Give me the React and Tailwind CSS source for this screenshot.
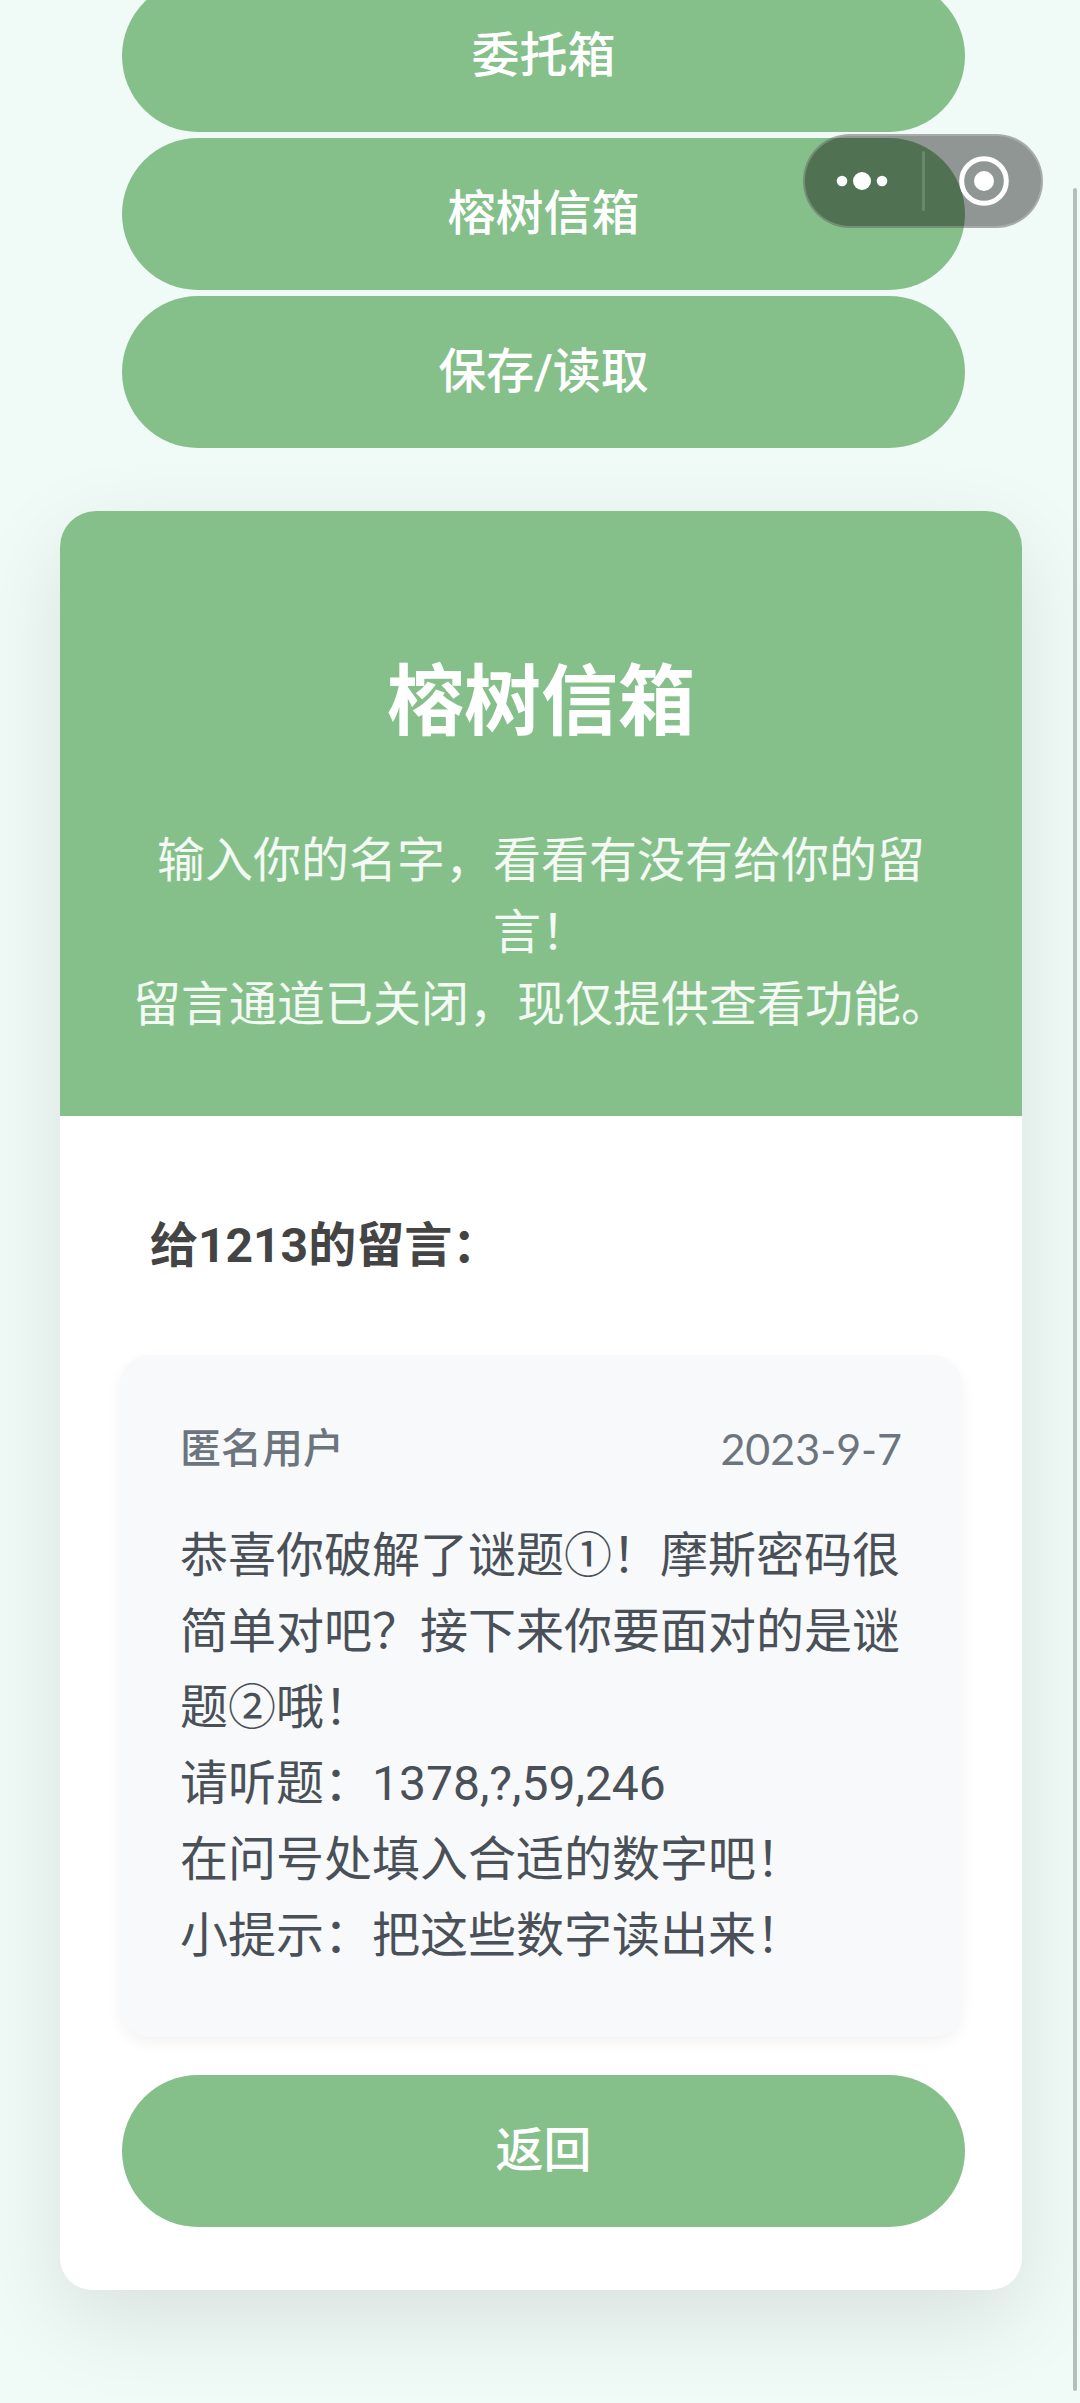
const NAV_ITEMS = ['委托箱', '榕树信箱', '保存/读取'];

const MESSAGE = {
  author: '匿名用户',
  date: '2023-9-7',
  lines: [
    '恭喜你破解了谜题①！摩斯密码很简单对吧？接下来你要面对的是谜题②哦！',
    '请听题：1378,?,59,246',
    '在问号处填入合适的数字吧！',
    '小提示：把这些数字读出来！',
  ],
};

function PillButton({ children }) {
  return (
    <button
      type="button"
      className="flex h-[152px] w-full items-center justify-center rounded-full bg-[#85bf8a] text-[48px] leading-[72px] font-medium text-white"
    >
      {children}
    </button>
  );
}

function Capsule() {
  return (
    <div className="fixed top-[134px] right-[37px] flex h-[94px] w-[240px] items-center rounded-full border-2 border-white/20 bg-black/40">
      <button type="button" aria-label="更多" className="flex h-full flex-1 items-center justify-center pr-[3px]">
        <svg width="52" height="20" viewBox="0 0 52 20" fill="#fff" aria-hidden="true">
          <circle cx="6" cy="10" r="5.3" />
          <circle cx="26" cy="10" r="9" />
          <circle cx="46" cy="10" r="5.3" />
        </svg>
      </button>
      <span className="h-[60px] w-[3px] rounded-full bg-white/15" />
      <button type="button" aria-label="关闭" className="flex h-full flex-1 items-center justify-center pl-[3px]">
        <svg width="50" height="50" viewBox="0 0 50 50" aria-hidden="true">
          <circle cx="25" cy="25" r="22.3" fill="none" stroke="#fff" strokeWidth="5" />
          <circle cx="25" cy="25" r="10" fill="#fff" />
        </svg>
      </button>
    </div>
  );
}

export default function App() {
  return (
    <div className="min-h-screen overflow-hidden bg-[#f0faf7] pb-[112px] font-[Roboto,'Noto_Sans_CJK_SC',sans-serif]">
      <nav className="-mt-[20px] flex flex-col gap-[6px] pr-[115px] pl-[122px]">
        {NAV_ITEMS.map((label) => (
          <PillButton key={label}>{label}</PillButton>
        ))}
      </nav>

      <main className="mt-[63px] mr-[58px] ml-[60px] rounded-t-[36px] rounded-b-[32px] bg-white shadow-[0_30px_90px_rgba(0,0,0,0.1)]">
        <header className="rounded-t-[36px] bg-[#85bf8a] px-[60px] pt-[135px] pb-[75px] text-center text-white">
          <h1 className="text-[77px] leading-[115px] font-bold">榕树信箱</h1>
          <p className="mt-[64px] text-[48px] leading-[72px] text-white/90">
            输入你的名字，看看有没有给你的留言！
            <br />
            留言通道已关闭，现仅提供查看功能。
          </p>
        </header>

        <div className="px-[60px] pt-[94px] pb-[63px]">
          <h2 className="px-[30px] text-[48px] leading-[72px] font-bold text-[#444]">给1213的留言：</h2>

          <article className="mt-[73px] rounded-[30px] bg-[#f8f9fb] px-[60px] pt-[64px] pb-[63px] shadow-[0_6px_15px_rgba(0,0,0,0.05)]">
            <div className="flex items-center justify-between text-[41px] leading-[60px] text-[#6c757d]">
              <span className="font-medium">{MESSAGE.author}</span>
              <time dateTime="2023-09-07" className="font-[Lato,sans-serif] text-[43px]">{MESSAGE.date}</time>
            </div>
            <div className="mt-[39px] text-[48px] leading-[76px] text-[#495057]">
              {MESSAGE.lines.map((line) => (
                <p key={line}>{line}</p>
              ))}
            </div>
          </article>

          <div className="mt-[38px] -mr-[3px] ml-[2px]">
            <PillButton>返回</PillButton>
          </div>
        </div>
      </main>

      <Capsule />
      <div className="fixed top-[188px] right-[3px] bottom-[12px] w-[4px] rounded-full bg-[#b5bebb]" />
    </div>
  );
}
